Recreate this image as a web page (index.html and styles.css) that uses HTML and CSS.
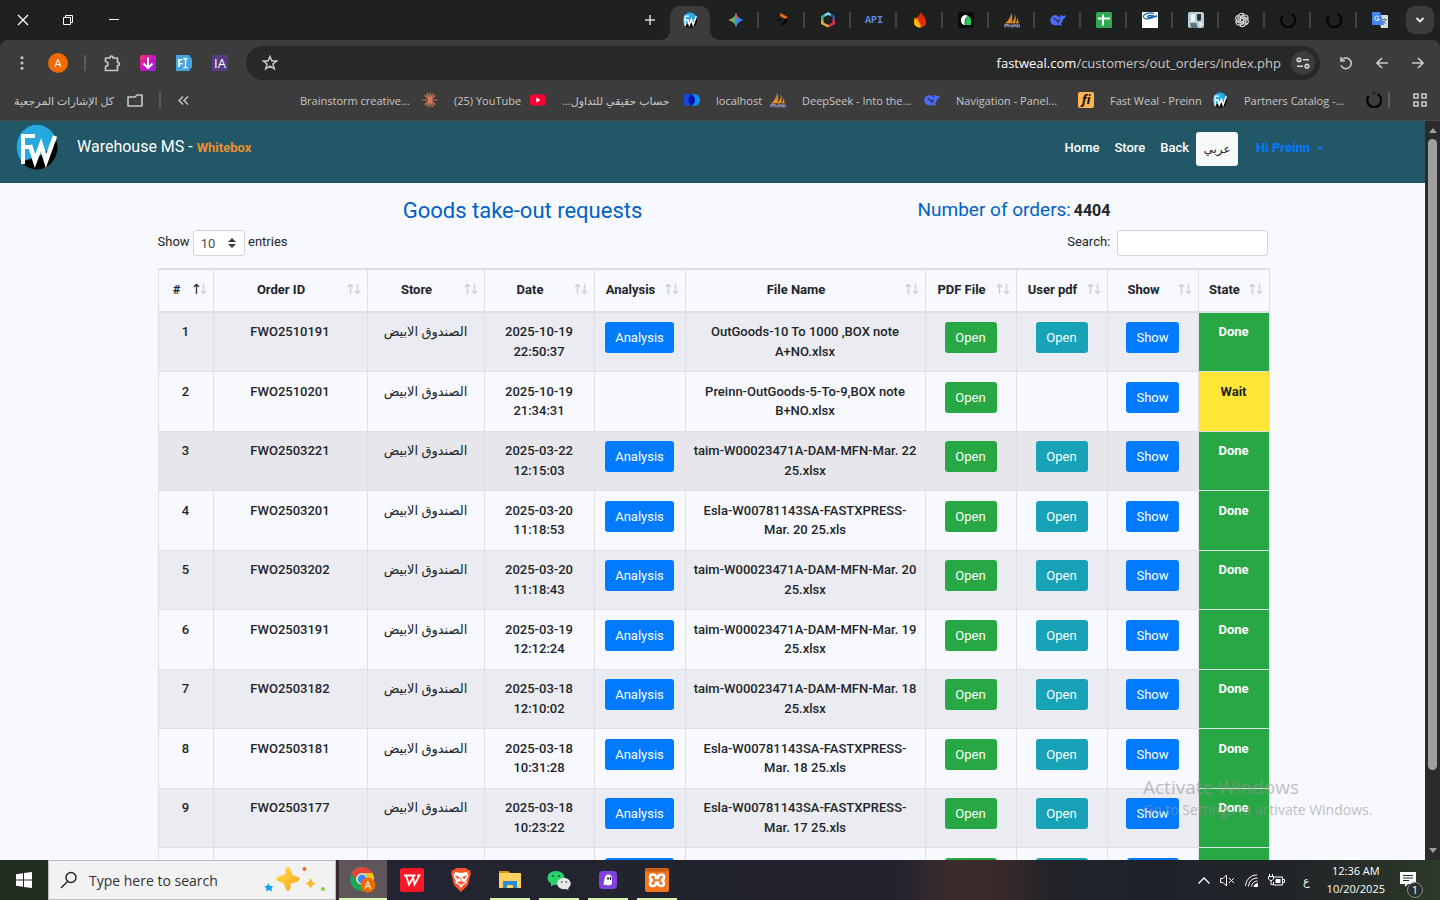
FILE: index.html
```html
<!DOCTYPE html>
<html lang="en">
<head>
<meta charset="utf-8">
<title>Warehouse MS</title>
<link rel="stylesheet" href="styles.css">
</head>
<body>
<svg class="defs" aria-hidden="true">
  <symbol id="fw" viewBox="0 0 42 46">
    <clipPath id="fwc"><ellipse cx="21" cy="23" rx="20.5" ry="22.5"/></clipPath>
    <g clip-path="url(#fwc)"><rect width="42" height="46" fill="#000"/><path d="M0 0H42V15L28 30L5 38H0Z" fill="#27a9e0"/></g>
    <path d="M5 12H19M7 12V40M7 23H16" stroke="#fff" stroke-width="4" fill="none"/>
    <path d="M14 21L19 37L25 21L30 37L39 12" stroke="#fff" stroke-width="4.500" fill="none"/>
  </symbol>
  <symbol id="whale" viewBox="0 0 16 16"><path d="M.3 8.500C.3 5 2.800 3 5.800 3.200 8 3.400 9 5 10.600 5.600 10 4 10.600 3 11.200 2.500 11.600 3.800 12.600 4.200 13.600 3.900 14.500 3.600 15.300 3 15.800 3.200 15.600 5.300 14.500 6.800 12.900 7.300 12.700 9.500 12 10.900 10.800 11.900L12.300 13.200C10.900 13.700 9.500 13.500 8.500 13.100 4.500 14.200.3 12.400.3 8.500Z" fill="#4d6bfe"/><path d="M3.300 6.500C5.500 6 7.200 10.500 9 11M7.500 8Q9.200 7.500 9.800 9.500" fill="none" stroke="#2b2c2d" stroke-width="1.200"/></symbol>
  <symbol id="pma" viewBox="0 0 16 16"><path d="M6.500.5C6.500 5 5 9 .8 11.500L7 11.200ZM10.500 2C11 6 9.500 9.500 7.300 11.200L11.300 11.200ZM12.600 4.500C13.500 7 13 9.500 11.800 11.200H15Z" fill="#f29111"/><path d="M7 .5C8.500 4 8.500 8 7.500 11.200L6.800 11ZM10.800 2C12 5 12 8 11.300 11.200Z" fill="#d8914a"/><path d="M1 15.500V12.500H3.500V14H1M5 12V15.500M5 13.500H7.500V15.500M9 15.500V12.500L10.500 14 12 12.500V15.500M13.500 15.500V13H15.300V15.500" fill="none" stroke="#8c8db8" stroke-width="1.200"/></symbol>
  <symbol id="ring" viewBox="0 0 16 16"><path d="M11.500 2A7 7 0 1 1 2.600 4" fill="none" stroke="#070707" stroke-width="2.500"/><path d="M7 2L9 .3" stroke="#111" stroke-width="1.500"/></symbol>
</svg>

<header class="tabstrip">
  <div class="winbtns">
    <button aria-label="Close"><svg width="12" height="12" viewBox="0 0 12 12"><path d="M1 1L11 11M11 1L1 11" stroke="#fff" stroke-width="1.300"/></svg></button>
    <button aria-label="Restore"><svg width="10" height="10" viewBox="0 0 10 10"><path d="M.5 2.500H7.500V9.500H.5ZM2.500 2.500V.5H9.500V7.500H7.500" fill="none" stroke="#fff"/></svg></button>
    <button aria-label="Minimize"><svg width="10" height="10" viewBox="0 0 10 10"><path d="M0 4.500H10" stroke="#fff"/></svg></button>
  </div>
  <nav class="tabs" aria-label="Tabs">
    <button class="newtab" aria-label="New tab"><svg width="12" height="12" viewBox="0 0 12 12"><path d="M6 1V11M1 6H11" stroke="#d5d5d5" stroke-width="1.500"/></svg></button>
    <div class="tab active"><svg width="16" height="16"><use href="#fw"/></svg></div>
    <div class="tab sep"><svg width="16" height="16" viewBox="0 0 16 16"><linearGradient id="gm"><stop offset=".1" stop-color="#f8c32c"/><stop offset=".35" stop-color="#52b36a"/><stop offset=".6" stop-color="#4285f4"/></linearGradient><path d="M8 .5Q9.500 6.500 15.500 8 9.500 9.500 8 15.500 6.500 9.500.5 8 6.500 6.500 8 .5Z" fill="url(#gm)"/><path d="M8 .5Q8.700 4 9.500 5.200L8 7 6.500 5.600Q7.500 4 8 .5Z" fill="#e8504d"/></svg></div>
    <div class="tab sep"><svg width="16" height="16" viewBox="0 0 16 16"><path d="M6.500 1L13.500 5 13 7.500 10.500 6.500 6 4Z" fill="#f3702a"/><path d="M13.500 6V10L7.500 14.500V11.500L10.500 9.500V7ZM3 7L7.500 7.500 4.500 9.500Z" fill="#080808"/></svg></div>
    <div class="tab sep"><svg width="16" height="16" viewBox="0 0 16 16" fill="none" stroke-width="2.500"><path d="M8 1.500L13.700 4.700V8" stroke="#35588a"/><path d="M13.700 7.500V11.300L8 14.500" stroke="#dc3154"/><path d="M8.500 14.300L2.300 11.300V8" stroke="#e5b43b"/><path d="M2.300 8.500V4.700L5.500 3" stroke="#35b889"/><path d="M4.800 3.300L8 1.500 10.500 3" stroke="#79d7f3"/></svg></div>
    <div class="tab sep api">API</div>
    <div class="tab sep"><svg width="14" height="16" viewBox="0 0 14 16"><path d="M8 0C9 3 13 5 13 10 13 14 10 15.500 7 15.500 3 15.500 1 13 1 10 1 7 6 5 8 0Z" fill="#dd2c00"/><path d="M1.500 6C4 7 6 8 8 15.300 4 16 1 13.500 1 10Z" fill="#ffc400"/><path d="M4 5L8 15 3 8Z" fill="#ff9100"/></svg></div>
    <div class="tab sep"><svg width="16" height="16" viewBox="0 0 16 16"><rect width="16" height="16" rx="3" fill="#090a0a"/><path d="M8.500 3C4.500 2.500 2.500 6 3 9 3.500 12 5 13 7 13 6 9 7 6 10 4Z" fill="#fff"/><path d="M10 4C13 5 13.500 8 13 13H7.500C6.500 9 8 6 10 4Z" fill="#20cf5a"/></svg></div>
    <div class="tab sep"><svg width="16" height="16"><use href="#pma"/></svg></div>
    <div class="tab sep"><svg width="16" height="16"><use href="#whale"/></svg></div>
    <div class="tab sep"><svg width="16" height="16" viewBox="0 0 16 16"><rect width="16" height="16" rx="1.500" fill="#2fa84f"/><path d="M7 2.500V13.500M2 6.500H14" stroke="#fff" stroke-width="2"/></svg></div>
    <div class="tab sep"><svg width="16" height="16" viewBox="0 0 16 16"><rect width="16" height="16" fill="#fff"/><path d="M12 1.500C7 0 1 2 1.500 5 2 8 9 7.500 15 3.500M15 5C11 3.500 6 2.500 5 5M5 5Q8 6 12 3.500" fill="none" stroke="#1667ba" stroke-width="1.200"/></svg></div>
    <div class="tab sep"><svg width="16" height="16" viewBox="0 0 16 16"><rect width="16" height="16" rx="2" fill="#b5d0d6"/><path d="M3 3Q7 0 7 4V9L3 10Z" fill="#f4f6f5"/><path d="M9 2H13V8Q11 10 9 8Z" fill="#30383d"/><path d="M2 11H8L10 16H3Z" fill="#5d747c"/><path d="M11 10L15 12 12 15Z" fill="#e8efe9"/></svg></div>
    <div class="tab sep"><svg width="16" height="16" viewBox="0 0 16 16" fill="none" stroke="#d9d9d9" stroke-width="1.100"><path id="gpt" d="M5 8V4.200Q5 1.300 7.600 1.300 9 1.300 10 2.200L6.500 4.300V8.800"/><use href="#gpt" transform="rotate(60 8 8)"/><use href="#gpt" transform="rotate(120 8 8)"/><use href="#gpt" transform="rotate(180 8 8)"/><use href="#gpt" transform="rotate(240 8 8)"/><use href="#gpt" transform="rotate(300 8 8)"/></svg></div>
    <div class="tab sep"><svg width="16" height="16"><use href="#ring"/></svg></div>
    <div class="tab sep"><svg width="16" height="16"><use href="#ring"/></svg></div>
    <div class="tab"><svg width="16" height="16" viewBox="0 0 16 16"><path d="M6 3H15Q16 3 16 4V15Q16 16 15 16H9Z" fill="#d7dce1"/><path d="M1 0H8L12 13H1Q0 13 0 12V1Q0 0 1 0Z" fill="#4285f4"/><path d="M7 5A2.300 2.300 0 1 0 7.300 7H5" fill="none" stroke="#fff"/><path d="M10 7.500H15M12.500 6.500V7.500M14 7.500Q13 10 10.500 11.500M11 9L14 12" fill="none" stroke="#68747e"/></svg></div>
    <button class="tabsearch" aria-label="Search tabs"><svg width="10" height="8" viewBox="0 0 10 8"><path d="M1.500 2L5 5.500 8.500 2" fill="none" stroke="#eee" stroke-width="1.800"/></svg></button>
  </nav>
</header>

<div class="toolbar">
  <button class="tool" aria-label="Menu"><svg width="4" height="14" viewBox="0 0 4 14" fill="#c7c7c7"><circle cx="2" cy="1.700" r="1.500"/><circle cx="2" cy="7" r="1.500"/><circle cx="2" cy="12.300" r="1.500"/></svg></button>
  <button class="tool" aria-label="Profile"><span class="avatar">A</span></button>
  <span class="toolsep"></span>
  <button class="tool" aria-label="Extensions"><svg width="17" height="17" viewBox="0 0 17 17"><path d="M1.500 3H6Q6 1.200 7.500 1.200T9 3H13.500V7.500Q15.500 7.500 15.500 9T13.500 10.500V15.500H1.500V11.500Q4 11 4 9T1.500 6.500Z" fill="none" stroke="#c7c7c7" stroke-width="1.700" stroke-linejoin="round"/></svg></button>
  <button class="tool" aria-label="Downloader"><svg width="16" height="16" viewBox="0 0 16 16"><linearGradient id="dl" x2="1" y2="1"><stop stop-color="#f6366c"/><stop offset=".5" stop-color="#cf10c5"/><stop offset="1" stop-color="#8b2be8"/></linearGradient><rect width="16" height="16" rx="2.500" fill="url(#dl)"/><path d="M8 2.500V13M3.500 8.500L8 13 12.500 8.500" stroke="#fff" stroke-width="2" fill="none"/></svg></button>
  <button class="tool" aria-label="Fonts"><svg width="16" height="16" viewBox="0 0 16 16"><path d="M0 0H13L16 4V12L13 16H0Z" fill="#43a4e0"/><text x="1" y="12" class="ico-t">F</text><path d="M7.500 3.500Q9.500 3.500 9.500 5V11.500Q9.500 13 7.500 13M11.500 3.500Q9.500 3.500 9.500 5M11.500 13Q9.500 13 9.500 11.500" stroke="#fff" stroke-width="1.300" fill="none"/></svg></button>
  <button class="tool" aria-label="IA"><span class="ia">IA</span></button>
  <div class="omnibox">
    <button aria-label="Bookmark"><svg width="16" height="16" viewBox="0 0 16 16"><path d="M8 1.500L9.900 6H14.700L10.900 9 12.300 13.900 8 11.100 3.700 13.900 5.100 9 1.300 6H6.100Z" fill="none" stroke="#c7c7c7" stroke-width="1.500"/></svg></button>
    <span class="url"><b>fastweal.com</b>/customers/out_orders/index.php</span>
    <button class="site" aria-label="Site information"><svg width="14" height="12" viewBox="0 0 14 12" fill="none" stroke="#d5d5d5" stroke-width="1.600"><circle cx="3" cy="2.800" r="1.800"/><path d="M7 2.800H13M1 9.200H7"/><circle cx="11" cy="9.200" r="1.800"/></svg></button>
  </div>
  <button class="tool" aria-label="Reload"><svg width="14" height="14" viewBox="0 0 14 14" fill="none" stroke="#c7c7c7" stroke-width="1.600"><path d="M2 1V5H6M2.200 5A5.300 5.300 0 1 1 2 9.200"/></svg></button>
  <button class="tool" aria-label="Back"><svg width="14" height="12" viewBox="0 0 14 12" fill="none" stroke="#c7c7c7" stroke-width="1.700"><path d="M13 6H2M7 1L2 6 7 11"/></svg></button>
  <button class="tool" aria-label="Forward"><svg width="14" height="12" viewBox="0 0 14 12" fill="none" stroke="#c7c7c7" stroke-width="1.700"><path d="M1 6H12M7 1L12 6 7 11"/></svg></button>
</div>

<div class="bookmarks">
  <a class="bm all" href="#"><span dir="rtl">كل الإشارات المرجعية</span><svg width="16" height="13" viewBox="0 0 16 13"><path d="M1 3H8L10 1H15V12H1Z" fill="none" stroke="#c7c7c7" stroke-width="1.600" stroke-linejoin="round"/></svg></a>
  <span class="bmsep"></span>
  <button class="more" aria-label="More bookmarks"><svg width="11" height="9" viewBox="0 0 11 9" fill="none" stroke="#c7c7c7" stroke-width="1.500"><path d="M5 .5L1 4.500 5 8.500M10 .5L6 4.500 10 8.500"/></svg></button>
  <div class="bmlist">
    <a class="bm wide" href="#"><span>Brainstorm creative...</span><svg width="16" height="16" viewBox="0 0 16 16" stroke="#d97757" stroke-width="1.200"><path d="M8 .5V15.500M.5 8H15.500M2.700 3.200L13.300 12.800M13.300 3.200L2.700 12.800M5 1.200L11 14.800M11 1.500L5 14.500"/></svg></a>
    <a class="bm youtube" href="#"><span>(25) YouTube</span><svg width="16" height="16" viewBox="0 0 16 16"><rect y="2.500" width="16" height="11" rx="2.500" fill="#ff0033"/><path d="M6.300 5.500L10.500 8 6.300 10.500Z" fill="#fff"/></svg></a>
    <a class="bm wide" href="#"><span dir="rtl">حساب حقيقي للتداول...</span><svg width="16" height="12" viewBox="0 0 16 12"><circle cx="10" cy="6" r="6" fill="#0b91ff"/><path d="M0 0H6Q11 1 11 6T5 11.500H0Z" fill="#1746e0"/><path d="M7.500.5Q11 2.500 11 6T7.500 11.500Q4.500 9.500 4.500 6T7.500.5Z" fill="#0617a8"/></svg></a>
    <a class="bm local" href="#"><span>localhost</span><svg width="16" height="16"><use href="#pma"/></svg></a>
    <a class="bm wide" href="#"><span>DeepSeek - Into the...</span><svg width="16" height="16"><use href="#whale"/></svg></a>
    <a class="bm wide" href="#"><span>Navigation - Panel...</span><span class="fi">fi</span></a>
    <a class="bm weal" href="#"><span>Fast Weal - Preinn</span><svg width="16" height="16"><use href="#fw"/></svg></a>
    <a class="bm wide" href="#"><span>Partners Catalog -...</span><svg width="16" height="16"><use href="#ring"/></svg></a>
  </div>
  <span class="bmsep"></span>
  <button class="apps" aria-label="Apps"><svg width="14" height="14" viewBox="0 0 14 14" fill="none" stroke="#c7c7c7" stroke-width="1.600"><path d="M1 1H5V5H1ZM9 1H13V5H9ZM1 9H5V13H1ZM9 9H13V13H9Z"/></svg></button>
</div>

<div class="viewport">
  <div class="page">
    <nav class="navbar">
      <svg class="logo" width="42" height="46"><use href="#fw"/></svg>
      <span class="brand">Warehouse MS - <b>Whitebox</b></span>
      <a href="#">Home</a>
      <a href="#">Store</a>
      <a href="#">Back</a>
      <button class="lang" lang="ar">عربي</button>
      <button class="user">Hi Preinn<span class="caret"></span></button>
    </nav>
    <main class="container">
      <div class="titles">
        <h1>Goods take-out requests</h1>
        <h2>Number of orders: <b>4404</b></h2>
      </div>
      <div class="controls">
        <label>Show <span class="selwrap"><select><option>10</option></select><svg width="8" height="10" viewBox="0 0 8 10"><path d="M4 0L8 4H0ZM0 6H8L4 10Z" fill="#343a40"/></svg></span> entries</label>
        <label class="search">Search: <input type="search"></label>
      </div>
      <table>
        <colgroup><col class="c-n"><col class="c-id"><col class="c-store"><col class="c-date"><col class="c-btn"><col class="c-file"><col class="c-btn"><col class="c-btn"><col class="c-btn"><col class="c-state"></colgroup>
        <thead><tr><th class="asc">#</th><th>Order ID</th><th>Store</th><th>Date</th><th>Analysis</th><th>File Name</th><th>PDF File</th><th>User pdf</th><th>Show</th><th>State</th></tr></thead>
        <tbody>
          <tr><td>1</td><td>FWO2510191</td><td>الصندوق الابيض</td><td>2025-10-19 22:50:37</td><td><button class="btn blue">Analysis</button></td><td>OutGoods-10 To 1000 ,BOX note A+NO.xlsx</td><td><button class="btn green">Open</button></td><td><button class="btn teal">Open</button></td><td><button class="btn blue">Show</button></td><td class="done">Done</td></tr>
          <tr><td>2</td><td>FWO2510201</td><td>الصندوق الابيض</td><td>2025-10-19 21:34:31</td><td></td><td>Preinn-OutGoods-5-To-9,BOX note B+NO.xlsx</td><td><button class="btn green">Open</button></td><td></td><td><button class="btn blue">Show</button></td><td class="wait">Wait</td></tr>
          <tr class="hover"><td>3</td><td>FWO2503221</td><td>الصندوق الابيض</td><td>2025-03-22 12:15:03</td><td><button class="btn blue">Analysis</button></td><td>taim-W00023471A-DAM-MFN-Mar. 22 25.xlsx</td><td><button class="btn green">Open</button></td><td><button class="btn teal">Open</button></td><td><button class="btn blue">Show</button></td><td class="done">Done</td></tr>
          <tr><td>4</td><td>FWO2503201</td><td>الصندوق الابيض</td><td>2025-03-20 11:18:53</td><td><button class="btn blue">Analysis</button></td><td>Esla-W00781143SA-FASTXPRESS-Mar. 20 25.xls</td><td><button class="btn green">Open</button></td><td><button class="btn teal">Open</button></td><td><button class="btn blue">Show</button></td><td class="done">Done</td></tr>
          <tr><td>5</td><td>FWO2503202</td><td>الصندوق الابيض</td><td>2025-03-20 11:18:43</td><td><button class="btn blue">Analysis</button></td><td>taim-W00023471A-DAM-MFN-Mar. 20 25.xlsx</td><td><button class="btn green">Open</button></td><td><button class="btn teal">Open</button></td><td><button class="btn blue">Show</button></td><td class="done">Done</td></tr>
          <tr><td>6</td><td>FWO2503191</td><td>الصندوق الابيض</td><td>2025-03-19 12:12:24</td><td><button class="btn blue">Analysis</button></td><td>taim-W00023471A-DAM-MFN-Mar. 19 25.xlsx</td><td><button class="btn green">Open</button></td><td><button class="btn teal">Open</button></td><td><button class="btn blue">Show</button></td><td class="done">Done</td></tr>
          <tr><td>7</td><td>FWO2503182</td><td>الصندوق الابيض</td><td>2025-03-18 12:10:02</td><td><button class="btn blue">Analysis</button></td><td>taim-W00023471A-DAM-MFN-Mar. 18 25.xlsx</td><td><button class="btn green">Open</button></td><td><button class="btn teal">Open</button></td><td><button class="btn blue">Show</button></td><td class="done">Done</td></tr>
          <tr><td>8</td><td>FWO2503181</td><td>الصندوق الابيض</td><td>2025-03-18 10:31:28</td><td><button class="btn blue">Analysis</button></td><td>Esla-W00781143SA-FASTXPRESS-Mar. 18 25.xls</td><td><button class="btn green">Open</button></td><td><button class="btn teal">Open</button></td><td><button class="btn blue">Show</button></td><td class="done">Done</td></tr>
          <tr><td>9</td><td>FWO2503177</td><td>الصندوق الابيض</td><td>2025-03-18 10:23:22</td><td><button class="btn blue">Analysis</button></td><td>Esla-W00781143SA-FASTXPRESS-Mar. 17 25.xls</td><td><button class="btn green">Open</button></td><td><button class="btn teal">Open</button></td><td><button class="btn blue">Show</button></td><td class="done">Done</td></tr>
          <tr><td></td><td></td><td></td><td></td><td><button class="btn blue" aria-label="Analysis"></button></td><td></td><td><button class="btn green" aria-label="Open"></button></td><td><button class="btn teal" aria-label="Open"></button></td><td><button class="btn blue" aria-label="Show"></button></td><td class="done"></td></tr>
        </tbody>
      </table>
    </main>
  </div>
  <div class="scrollbar"><span class="up"></span><span class="thumb"></span><span class="down"></span></div>
  <div class="watermark"><p>Activate Windows</p><p>Go to Settings to activate Windows.</p></div>
</div>

<footer class="taskbar">
  <button class="start" aria-label="Start"><svg width="16" height="16" viewBox="0 0 16 16" fill="#fff"><path d="M0 2.200L7 1.200V7.500H0ZM8 1L16 0V7.500H8ZM0 8.500H7V14.800L0 13.800ZM8 8.500H16V16L8 15Z"/></svg></button>
  <button class="find"><svg width="18" height="18" viewBox="0 0 18 18" fill="none" stroke="#222" stroke-width="1.400"><circle cx="11" cy="6.500" r="5"/><path d="M7.500 10.500L1 17"/></svg><span>Type here to search</span>
    <svg width="62" height="28" viewBox="0 0 62 28"><linearGradient id="sp" x2="1" y2="1"><stop stop-color="#ffdc45"/><stop offset="1" stop-color="#f7a51d"/></linearGradient><path d="M24 1Q26 1 27 5T29 9 35 11.500Q37 13 35 14.500T29 17 27 21Q26 25 24 25T21 21 19 17 13 14.500Q11 13 13 11.500T19 9 21 5Q22 1 24 1Z" fill="url(#sp)"/><path d="M46.500 12L48.500 16 52 17.500 48.500 19 46.500 23 44.500 19 41 17.500 44.500 16Z" fill="#fcb827"/><path d="M4 17L6 20 9 20 7.500 22.500 8 25.500 5 24 2 25 2.500 22 0 20.500 3.500 19.500Z" fill="#10a4e8"/><circle cx="40.500" cy="3" r="2" fill="#f26a31"/><circle cx="59" cy="23" r="2" fill="#8bc94a"/></svg></button>
  <div class="approw">
    <button class="app on cur" aria-label="Chrome"><svg width="26" height="26" viewBox="0 0 26 26"><circle cx="12" cy="12" r="12" fill="#20a454"/><path d="M1.600 6A12 12 0 0 1 22.400 6H12A6 6 0 0 0 6.500 14Z" fill="#ea4335"/><path d="M22.400 6A12 12 0 0 1 12 24L17.500 15A6 6 0 0 0 12 6Z" fill="#fbc116"/><circle cx="12" cy="12" r="5.800" fill="#fff"/><circle cx="12" cy="12" r="4.500" fill="#4285f4"/><circle cx="18" cy="18" r="7.500" fill="#f06a00"/><text x="18" y="22" text-anchor="middle" class="ico-a">A</text></svg></button>
    <button class="app" aria-label="WPS"><svg width="24" height="24" viewBox="0 0 24 24"><rect width="24" height="24" rx="2.500" fill="#fc1726"/><path d="M4 7.500H15.500M6 7.500L9 16.500 13 9.500 14.500 16.500 19.500 7.500H17" fill="none" stroke="#fff" stroke-width="1.800"/></svg></button>
    <button class="app" aria-label="Brave"><svg width="20" height="24" viewBox="0 0 20 24"><path d="M5 0H15L17 2H19L20 6 19 8 17 17 10 24 3 17 1 8 0 6 1 2H3Z" fill="#fb542b"/><path d="M4 4L10 5 16 4 17.500 8 15 13 16 14.500 12 17 10 20 8 17 4 14.500 5 13 2.500 8Z" fill="#fff"/><path d="M4.500 8L8 9 7 11ZM15.500 8L12 9 13 11ZM8 13.500L10 15 12 13.500M10 9V15M6 14L10 16.500 14 14" fill="#fb542b" stroke="#fb542b" stroke-width=".8"/></svg></button>
    <button class="app on" aria-label="File Explorer"><svg width="22" height="20" viewBox="0 0 22 20"><path d="M0 1H9L11 3H22V18H0Z" fill="#ffd25d"/><path d="M0 1H9L10 3H0Z" fill="#d99a12"/><path d="M4 18V11H18V18H14V15H8V18Z" fill="#2b8ad8"/></svg></button>
    <button class="app on" aria-label="WeChat"><svg width="24" height="21" viewBox="0 0 24 21"><path d="M9 1C14 1 17.500 4 17.500 8S14 15 9 15L7 14.700 4 16.500 4 13.500C1.500 12 .5 10 .5 8 .5 4 4 1 9 1Z" fill="#29d36a"/><circle cx="6" cy="6" r="1.100" fill="#155c31"/><circle cx="12" cy="6" r="1.100" fill="#155c31"/><path d="M17 8C21 8 23.700 10.500 23.700 13.500 23.700 15.500 22.500 17 21.200 18L21.500 20 19 19C14 20 10.200 17 10.200 13.500S13 8 17 8Z" fill="#e7e7e7"/><circle cx="14.700" cy="12" r="1" fill="#777"/><circle cx="19.300" cy="12" r="1" fill="#777"/></svg></button>
    <button class="app on" aria-label="Ghost"><svg width="18" height="18" viewBox="0 0 18 18"><rect width="18" height="18" rx="4" fill="#8241e0"/><path d="M4.500 14Q5 11 5.500 8 6 3.500 9.500 3.500T13 8V12Q13 14.500 11 14L9 14.500 7 13.800Z" fill="#fff"/><ellipse cx="9" cy="7.500" rx=".8" ry="1.300"/><ellipse cx="11.500" cy="7.500" rx=".8" ry="1.300"/></svg></button>
    <button class="app on" aria-label="XAMPP"><svg width="24" height="24" viewBox="0 0 24 24"><rect width="24" height="24" rx="2" fill="#f0761f"/><rect x=".5" y=".5" width="23" height="3" fill="#c75b15"/><path d="M8 6.500Q5 6 5 9T8 12Q5 12.500 5 15.500T8 18Q11 18 11 14.500H13Q13 18 16 18T19 15.500 16 12Q19 12 19 9T16 6.500 13 10H11Q11 6.500 8 6.500Z" fill="none" stroke="#fff" stroke-width="2.600"/></svg></button>
  </div>
  <div class="tray">
    <svg width="12" height="7" viewBox="0 0 12 7" fill="none" stroke="#fff" stroke-width="1.300"><path d="M.5 6.500L6 1 11.500 6.500"/></svg>
    <svg width="15" height="13" viewBox="0 0 15 13" fill="none" stroke="#fff"><path d="M.5 4.500H3L6.500 1V12L3 8.500H.5ZM9 4L14 9M14 4L9 9"/></svg>
    <svg width="13" height="13" viewBox="0 0 13 13" fill="none" stroke="#fff"><path d="M.5 12A11.500 11.500 0 0 1 12 .8M3.500 12.500A8.500 8.500 0 0 1 12.500 4M6.500 12.500A6 6 0 0 1 12.500 7"/><path d="M9 12.500Q9.500 10 12.500 9.500V12.500Z" fill="#fff"/></svg>
    <svg width="17" height="13" viewBox="0 0 17 13" fill="none" stroke="#fff"><path d="M5.500 3H14.500V11H5.500V8M15 5.500H16.500V8.500H15M1.500 0V2.500M4.500 0V2.500M.5 2.500H5.500V5L4 6.500H2L.5 5ZM3 6.500V10.500H5"/><path d="M8 5H12.500V9H7.500V6Z" fill="#fff" stroke="none"/></svg>
    <span class="ime">ع</span>
    <time>12:36 AM<br>10/20/2025</time>
    <span class="note"><svg width="16" height="15" viewBox="0 0 16 15"><path d="M0 0H16V12H8L5 15V12H0Z" fill="#fff"/><path d="M3 3.500H13M3 6H13M3 8.500H9" stroke="#252a29"/></svg><span class="count">1</span></span>
  </div>
</footer>
</body>
</html>
```
FILE: styles.css
```css
* { box-sizing: border-box; }
body {
  margin: 0;
  height: 100vh;
  display: flex;
  flex-direction: column;
  overflow: hidden;
  background: #1f2120;
  font-family: "Open Sans", "Noto Sans", "DejaVu Sans", sans-serif;
  font-size: 11px;
}
button { border: 0; padding: 0; margin: 0; background: none; color: inherit; font: inherit; }
a { color: inherit; text-decoration: none; }
svg { flex: none; display: block; }
.defs { position: absolute; width: 0; height: 0; }

.tabstrip { height: 40px; flex: none; display: flex; justify-content: space-between; background: #1f2120; }
.winbtns { display: flex; }
.winbtns button { width: 46px; display: grid; place-items: center; }
.winbtns button:first-child { width: 45px; }
.tabs { display: flex; align-items: center; padding-right: 6px; }
.newtab { width: 34px; display: grid; place-items: center; }
.tab { position: relative; width: 46px; height: 40px; display: grid; place-items: center; }
.tab.sep { background: linear-gradient(#404342, #404342) 100% 50% / 2px 16px no-repeat; }
.tab.active::before {
  content: ""; position: absolute; inset: 6px 3px 0; background: #3c3c3c; border-radius: 10px 10px 0 0;
}
.tab.active::after {
  content: ""; position: absolute; left: -7px; right: -7px; bottom: 0; height: 10px;
  background:
    radial-gradient(circle at 0 0, transparent 10px, #3c3c3c 10px) 0 0 / 10px 10px no-repeat,
    radial-gradient(circle at 100% 0, transparent 10px, #3c3c3c 10px) 100% 0 / 10px 10px no-repeat;
}
.tab svg { position: relative; z-index: 1; }
.api { color: #5d86e8; font: bold 10px "Liberation Mono", monospace; }
.tabsearch { width: 28px; height: 28px; margin-left: 3px; border-radius: 9px; background: #3c3c3c; display: grid; place-items: center; }

.toolbar { height: 46px; flex: none; display: flex; align-items: center; padding: 0 4px; background: #3c3c3c; border-radius: 8px 8px 0 0; }
.tool { width: 36px; height: 36px; display: grid; place-items: center; }
.toolsep { width: 2px; height: 16px; margin: 0 8px; background: #5c5c5c; }
.avatar { width: 20px; height: 20px; border-radius: 50%; background: #f06a00; color: #fff; font-size: 11px; line-height: 20px; }
.ia { width: 16px; height: 16px; background: #563d82; color: #fff; font: 13px/16px "Open Sans", sans-serif; }
.ico-t { fill: #fff; font: bold 11px "Open Sans", sans-serif; }
.ico-a { fill: #fff; font: 10px "Open Sans", sans-serif; }
.omnibox { flex: 1; height: 34px; margin: 0 8px; padding: 0 5px 0 16px; display: flex; align-items: center; border-radius: 17px; background: #282828; }
.url { margin-left: auto; margin-right: 10px; color: #c7c7c7; font-size: 13px; }
.url b { color: #fff; font-weight: 400; }
.site { width: 24px; height: 24px; border-radius: 50%; background: #3c3c3c; display: grid; place-items: center; }

.bookmarks { height: 35px; flex: none; display: flex; align-items: center; padding: 0 13px 6px 14px; background: #3c3c3c; color: #c7c7c7; border-bottom: 1px solid #4b4a47; }
.bm { display: flex; align-items: center; justify-content: space-between; white-space: nowrap; }
.bm.wide { width: 138px; }
.bm.youtube { width: 92px; }
.bm.local { width: 70px; }
.bm.weal { width: 118px; }
.bm.all { width: 129px; }
.bmsep { width: 2px; height: 16px; margin-left: 16px; background: #5c5c5c; }
.more { margin-left: 17px; }
.bmlist { display: flex; gap: 16px; margin-left: auto; }
.bmlist + .bmsep { margin-left: 6px; }
.apps { margin-left: 23px; }
.fi { width: 16px; height: 16px; border-radius: 2px; background: #fdb554; color: #111; font: italic bold 13px/15px "Open Sans", sans-serif; text-align: center; }

.viewport { position: relative; flex: 1; min-height: 0; display: flex; overflow: hidden; }
.page { flex: 1; overflow: hidden; background: #f8f9ff; color: #212529; font-family: Roboto, "Noto Sans", "DejaVu Sans", sans-serif; font-size: 13px; line-height: 1.5; }
.scrollbar { width: 15px; display: flex; flex-direction: column; align-items: center; background: #2b2b2b; padding: 7px 0; }
.up, .down { border: 4px solid transparent; border-top: 0; border-bottom: 5px solid #9f9f9f; }
.down { border-bottom: 0; border-top: 5px solid #9f9f9f; margin-top: auto; }
.thumb { width: 9px; height: 87%; margin-top: 6px; border-radius: 5px; background: #9f9f9f; }
.watermark { position: absolute; left: 1143px; bottom: 40px; color: rgba(150, 150, 150, .6); pointer-events: none; }
.watermark p { margin: 0; font-size: 14px; line-height: 20px; }
.watermark p:first-child { font-size: 19px; line-height: 25px; }

.navbar { height: 62px; display: flex; align-items: flex-start; padding: 3px 102px 0 16px; background: #225768; color: #fff; font-size: 13px; line-height: 48px; }
.brand { margin: 0 auto 0 19px; font-size: 16px; line-height: 45px; }
.brand b { color: #ea8f2f; font-size: 13px; }
.navbar a { margin-right: 15px; font-weight: 500; }
.navbar a:nth-of-type(3) { margin-right: 7px; }
.lang { width: 42px; height: 34px; margin-top: 8px; border-radius: 3px; background: #f8f9fa; color: #212529; font-size: 12px; line-height: 34px; }
.user { display: flex; align-items: center; margin-left: 18px; color: #007bff; font-weight: 700; font-size: 13px; line-height: 48px; }
.caret { margin-left: 7px; border: 3px solid transparent; border-top-color: #007bff; border-bottom: 0; }

.container { max-width: 1140px; margin: 0 auto; padding: 0 15px; }
.titles { display: grid; grid-template-columns: 2fr 1fr; margin: 0 -15px; padding-top: 10px; align-items: start; }
h1, h2 { margin: 0; color: #0062c4; font-weight: 400; line-height: 36px; }
h1 { font-size: 22px; text-align: center; }
h2 { font-size: 19px; line-height: 34px; padding-left: 15px; }
h2 b { color: #212529; font-size: 16px; margin-left: -2px; }
.controls { display: flex; justify-content: space-between; align-items: center; height: 28px; }
.selwrap { position: relative; display: inline-block; vertical-align: middle; }
.selwrap svg { position: absolute; right: 9px; top: 8px; pointer-events: none; }
select { appearance: none; width: 52px; height: 26px; padding: 0 7px; border: 1px solid #ced4da; border-radius: 3px; background: #fff; color: #495057; font: 13px Roboto, sans-serif; }
.search input { width: 151px; height: 26px; margin-left: 3px; border: 1px solid #ced4da; border-radius: 3px; background: #fff; vertical-align: middle; }

table { width: calc(100% + 2px); margin-top: 11px; table-layout: fixed; border-collapse: collapse; text-align: center; font-weight: 500; border: 1px solid #dee2e6; }
.c-n { width: 55px; } .c-id { width: 154px; } .c-store { width: 117px; } .c-date { width: 110px; }
.c-btn { width: 91px; } .c-file { width: 240px; } .c-state { width: 71px; }
th, td { padding: .75em 6px; border: 1px solid #dee0e6; vertical-align: top; }
td:nth-child(4) { padding-left: 16px; padding-right: 16px; }
th { position: relative; padding: 10px 28px 11px 10px; border-width: 2px 1px; font-weight: 700; white-space: nowrap; }
th::before, th::after { content: "↑"; position: absolute; right: 10px; top: 9px; color: #c9ccd2; font: 14px/20px "DejaVu Sans", sans-serif; }
th::after { content: "↓"; right: 3px; }
th.asc::before { color: #212529; }
tbody tr:nth-child(odd) { background: #ebecf1; }
tbody tr.hover { background: #e6e6eb; }
td.done { background: #28a745; color: #fff; font-weight: 700; }
td.wait { background: #ffe535; font-weight: 700; }
.btn { min-width: 52px; height: 31px; padding: 0 10px; border-radius: 3px; color: #fff; line-height: 31px; font-weight: 400; vertical-align: top; }
td:nth-child(5) .btn { min-width: 69px; }
.blue { background: #007bff; } .green { background: #28a745; } .teal { background: #17a2b8; }
td:has(.btn) { padding-left: 0; padding-right: 0; padding-bottom: 0; }

.taskbar { height: 40px; flex: none; display: flex; background: linear-gradient(90deg, #3b2a2f 23%, #242532 27%, #21232e 48%, #22222e 62%, #3c2b2b 66%, #3a2a2a 69%, #22242a 73%, #20222b 80%, #222528 90%, #2d3929); color: #fff; }
.start { width: 48px; display: grid; place-items: center; background: #222e20; }
.find { width: 288px; display: flex; align-items: center; padding: 0 9px 0 11px; border: 1px solid #bcbcbc; background: #f2f2f2; color: #333; font-size: 14px; white-space: nowrap; }
.find span { margin: 0 auto 0 11px; }
.approw { display: flex; gap: 1px; margin-left: 3px; }
.app { width: 48px; height: 40px; display: grid; place-items: center; }
.app.on { background: linear-gradient(#d3f5ad, #d3f5ad) 50% 100% / 40px 2px no-repeat; }
.app.cur { background: linear-gradient(#d3f5ad, #d3f5ad) 50% 100% / 48px 2px no-repeat #5f5659; }
.tray { margin-left: auto; display: flex; align-items: center; gap: 10px; padding-right: 17px; }
.ime { margin-left: 8px; }
time { margin-left: 7px; text-align: center; line-height: 18px; }
.note { position: relative; width: 23px; height: 24px; margin-left: 5px; padding-top: 4px; }
.count { position: absolute; right: 0; bottom: -6px; width: 16px; height: 16px; border: 1px solid #8c8c8c; border-radius: 50%; background: #2b302b; line-height: 14px; text-align: center; }
```
